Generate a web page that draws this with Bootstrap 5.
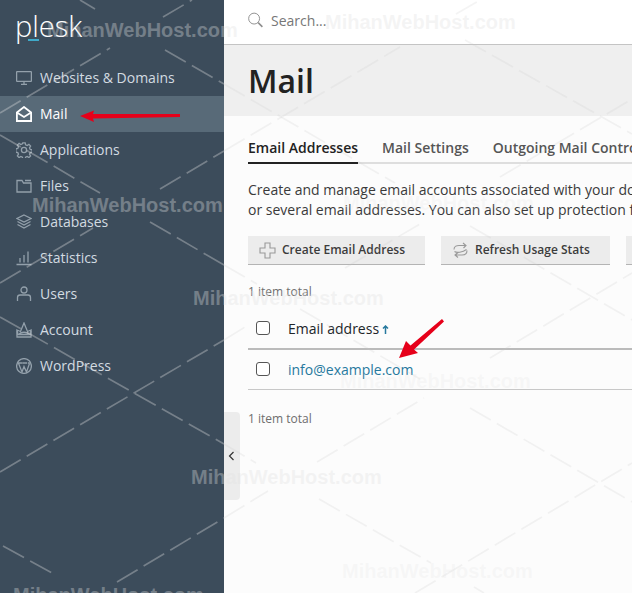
<!DOCTYPE html>
<html lang="en">
<head>
  <meta charset="UTF-8" />
  <title>Mail - Plesk</title>
  <link href="https://cdn.jsdelivr.net/npm/bootstrap@5.3.0/dist/css/bootstrap.min.css" rel="stylesheet" />
  <style>
    html, body { height: 593px; overflow: hidden; }
    body { font-family: "Open Sans", "Liberation Sans", sans-serif; font-size: 14px; color: #222; background: #fcfcfc; position: relative; }
    .side { width: 224px; height: 593px; flex: none; background: #3c4c5b; }
    .logo-box { height: 60px; padding: 8px 0 0 15px; }
    .logo-word { display: block; width: 70px; color: #fff; font-size: 29px; font-weight: 300; line-height: 36px; position: relative; }
    .logo-word::after { content: ""; position: absolute; left: 13px; top: 31px; width: 11px; height: 1.5px; background: #3fa9c9; }
    .side .nav-link { height: 36px; padding: 0 0 2px 16px; display: flex; align-items: center; gap: 8px; color: #d3dbe1; font-size: 14px; }
    .side .nav-link.active { background: #586a78; color: #fff; }
    .side svg { width: 16px; height: 16px; flex: none; margin-top: 2px; fill: none; stroke: #93a0ab; stroke-width: 1.3; }
    .side .active svg { stroke: #fff; stroke-width: 1.8; }
    .main-col { min-width: 0; flex: 1 1 0; overflow: hidden; }
    .top-bar { height: 45px; background: #fff; border-bottom: 1px solid #c4c4c4; padding: 0 0 4px 24px; gap: 8px; }
    .top-bar input { padding: 0; border: 0; background: transparent; box-shadow: none; font-size: 14px; font-family: inherit; }
    .top-bar input::placeholder { color: #777; }
    .title-band { height: 71px; background: #efefef; padding: 0 0 0 24px; display: flex; align-items: center; }
    .title-band h1 { margin: 0; font-size: 32px; line-height: 40px; font-weight: 600; color: #222; }
    .content-box { padding: 16px 0 0 24px; }
    .tab-row { flex-wrap: nowrap; gap: 24px; height: 32px; border-bottom: 2px solid #dedede; white-space: nowrap; }
    .tab-row .nav-link { padding: 0; height: 32px; line-height: 32px; font-weight: 600; color: #555; font-size: 14px; }
    .tab-row .nav-link.active { color: #222; border-bottom: 2px solid #222; }
    .intro { margin: 16px 0 0; line-height: 20px; white-space: nowrap; color: #3a3a3a; }
    .tool-row { margin-top: 16px; gap: 16px; flex-wrap: nowrap; }
    .tool-row .btn { height: 28px; flex: none; padding: 0 20px 0 11px; background: #ececec; border: 0; border-radius: 0; box-shadow: 0 1px 0 #b4b4b4; font-size: 12px; font-weight: 600; color: #3c3c3c; display: flex; align-items: center; gap: 6px; white-space: nowrap; }
    .tool-row svg { width: 17px; height: 17px; fill: none; stroke: #999; stroke-width: 1.1; }
    .count-txt { font-size: 12px; line-height: 16px; color: #6e6e6e; }
    .mail-table { margin: 8px 0 0; }
    .mail-table td, .mail-table th { background: transparent; padding: 0; vertical-align: middle; font-weight: 400; }
    .mail-table .chk-cell { width: 40px; padding-left: 8px; }
    .mail-table thead th { height: 41px; border-bottom: 2px solid #bbb; }
    .mail-table tbody td { height: 40px; border-bottom: 1px solid #c8c8c8; }
    .mail-table .form-check-input { display: block; margin: 0; width: 14px; height: 14px; border: 1px solid #555; border-radius: 3px; background-color: #fff; }
    .mail-table a { color: #27799e; text-decoration: none; }
    .sort-up { width: 7px; height: 9px; margin-left: 3px; fill: none; stroke: #27799e; stroke-width: 1.5; }
    .foot-count { margin-top: 21px; }
    .fold-tab { position: absolute; left: 224px; top: 412px; width: 16px; height: 88px; background: #ececec; border-radius: 0 4px 4px 0; display: flex; align-items: center; justify-content: center; padding-right: 2px; }
    .fold-tab svg { width: 7px; height: 10px; fill: none; stroke: #333; stroke-width: 1.2; }
    .overlay { position: absolute; left: 0; top: 0; width: 632px; height: 593px; pointer-events: none; }
    .wm-lines path { stroke-width: 1.7; stroke-dasharray: 24 7; fill: none; }
    .wm-strong { stroke: rgb(225,225,225); stroke-opacity: .35; }
    .wm-faint { stroke: rgb(200,200,200); stroke-opacity: .2; }
    .overlay text { font-family: "Liberation Sans", Arial, sans-serif; font-size: 20px; font-weight: 700; fill: rgb(225,225,225); fill-opacity: .35; }
    .overlay text.wm-pale { fill-opacity: .2; }
  </style>
</head>
<body>
  <div class="d-flex">
    <aside class="side">
      <div class="logo-box"><span class="logo-word">plesk</span></div>
      <nav class="nav flex-column">
        <a class="nav-link" href="#">
          <svg viewBox="0 0 16 16"><rect x=".6" y="1.6" width="14.8" height="9.8" rx=".5"/><path d="M5 14.400h6M8 11.400v3"/></svg>
          Websites &amp; Domains</a>
        <a class="nav-link active" href="#">
          <svg viewBox="0 0 16 16"><path d="M.9 6.500 8 1l7.100 5.500V15H.9z"/><path d="M.9 6.500 8 11l7.100-4.500"/></svg>
          Mail</a>
        <a class="nav-link" href="#">
          <svg viewBox="0 0 16 16"><circle cx="8" cy="8" r="2.600"/><path d="M6.800.8h2.400l.4 2 1.600.7 1.700-1.100 1.700 1.700-1.100 1.700.7 1.600 2 .4v2.400l-2 .4-.7 1.600 1.100 1.700-1.700 1.700-1.700-1.100-1.600.7-.4 2H6.800l-.4-2-1.600-.7-1.700 1.100-1.700-1.700 1.100-1.700-.7-1.600-2-.4V6.800l2-.4.7-1.600-1.100-1.700 1.700-1.700 1.700 1.100 1.600-.7z"/></svg>
          Applications</a>
        <a class="nav-link" href="#">
          <svg viewBox="0 0 16 16"><path d="M1 2.500h5l1.500 2.500H15v9H1zM9 2.500h6"/></svg>
          Files</a>
        <a class="nav-link" href="#">
          <svg viewBox="0 0 16 16"><path d="M8 1 15 4.500 8 8 1 4.500zM1.500 7.500 8 11l6.500-3.500M1.500 10.500 8 14l6.500-3.500"/></svg>
          Databases</a>
        <a class="nav-link" href="#">
          <svg viewBox="0 0 16 16"><path d="M.5 14.500h15M4 12.500V8M8 12.500V5M12 12.500V1.500"/></svg>
          Statistics</a>
        <a class="nav-link" href="#">
          <svg viewBox="0 0 16 16"><circle cx="8" cy="4" r="3"/><path d="M1.500 15v-3.500c0-1.500 1-2.500 2.500-2.500h8c1.500 0 2.500 1 2.500 2.500V15"/></svg>
          Users</a>
        <a class="nav-link" href="#">
          <svg viewBox="0 0 16 16"><path d="M.8 8.500 1 15h14l.2-6.500M1 8l3.500 1.500L8 1l3.500 8.500L15 8l-1 4.500H2zM3 12.500c1.500-3 8.500-3 10 0"/></svg>
          Account</a>
        <a class="nav-link" href="#">
          <svg viewBox="0 0 16 16"><circle cx="8" cy="8" r="7.400"/><path d="M2.600 5.500 6 14l2-5.500L10.500 14l3-8.500M1.800 5h4.500M6.500 5h4.500M11.800 5h2"/></svg>
          WordPress</a>
      </nav>
    </aside>

    <div class="main-col">
      <header class="top-bar d-flex align-items-center">
        <svg viewBox="0 0 16 16" width="16" height="16" fill="none" stroke="#8c8c8c" stroke-width="1"><circle cx="6.500" cy="6.500" r="5.800"/><path d="m10.800 10.800 4.500 4.500" stroke-width="1.600"/></svg>
        <input class="form-control" type="text" placeholder="Search..." />
      </header>
      <div class="title-band"><h1>Mail</h1></div>
      <div class="content-box">
        <ul class="nav tab-row">
          <li class="nav-item"><a class="nav-link active" href="#">Email Addresses</a></li>
          <li class="nav-item"><a class="nav-link" href="#">Mail Settings</a></li>
          <li class="nav-item"><a class="nav-link" href="#">Outgoing Mail Control</a></li>
        </ul>
        <p class="intro">Create and manage email accounts associated with your domains. You can create one<br />or several email addresses. You can also set up protection from spam and viruses.</p>
        <div class="tool-row d-flex">
          <button class="btn" type="button">
            <svg viewBox="0 0 17 17"><path d="M6 1h5v5h5v5h-5v5H6v-5H1V6h5z"/></svg>
            Create Email Address</button>
          <button class="btn" type="button">
            <svg viewBox="0 0 17 17"><path d="M2 7.500C2 4 5 3.500 7 3.500h6.500M11 1l3 2.500L11.500 6M15 8.500c0 4-3 4.500-5 4.500H3.500M6 10.500 3 13l3 2.500M2.500 9.500c2 1.500 8 1 12-2"/></svg>
            Refresh Usage Stats</button>
          <button class="btn" type="button" aria-label="More"></button>
        </div>
        <div class="count-txt mt-3 pt-1">1 item total</div>
        <table class="table mail-table">
          <thead>
            <tr>
              <th class="chk-cell"><input class="form-check-input" type="checkbox" aria-label="Select all" /></th>
              <th>Email address<svg class="sort-up" viewBox="0 0 7 9"><path d="M3.500 9V1M1 3.500 3.500 1 6 3.500"/></svg></th>
            </tr>
          </thead>
          <tbody>
            <tr>
              <td class="chk-cell"><input class="form-check-input" type="checkbox" aria-label="Select" /></td>
              <td><a href="#">info@example.com</a></td>
            </tr>
          </tbody>
        </table>
        <div class="count-txt foot-count">1 item total</div>
      </div>
    </div>
  </div>

  <div class="fold-tab"><svg viewBox="0 0 7 10"><path d="M5.500 1 1.500 5l4 4"/></svg></div>

  <!-- watermark and the two red arrows lie over the whole shot -->
  <svg class="overlay" viewBox="0 0 632 593">
    <g class="wm-lines wm-strong">
      <path d="M165 50 224 84" />
      <path d="M80 0 95 9" />
      <path d="M0 135 100 193M150 222 224 265" />
      <path d="M0 317 224 444" />
      <path d="M3 546 52 573" />
      <path d="M0 113 110 48M163 17 192 0" />
      <path d="M0 283 93 228M160 189 224 151" />
      <path d="M0 472 224 340" />
      <path d="M117 582 224 518" />
    </g>
    <g class="wm-lines wm-faint">
      <path d="M465 40 632 134" />
      <path d="M224 84 395 183M470 226 632 320" />
      <path d="M224 265 257 284M300 309 420 379M470 408 632 502" />
      <path d="M224 444 256 463M319 499 431 563M474 587 484 593" />
      <path d="M224 151 400 47M456 14 480 0" />
      <path d="M224 340 245 327M345 268 420 224M500 177 632 99" />
      <path d="M224 518 268 491M317 462 424 398M490 358 632 273" />
      <path d="M415 593 632 463" />
    </g>
    <text x="47" y="37">MihanWebHost.com</text>
    <text x="325" y="29">MihanWebHost.com</text>
    <text x="32" y="212">MihanWebHost.com</text>
    <text class="wm-pale" x="343" y="210">MihanWebHost.com</text>
    <text x="193" y="305">MihanWebHost.com</text>
    <text class="wm-pale" x="340" y="388">MihanWebHost.com</text>
    <text x="191" y="484">MihanWebHost.com</text>
    <text class="wm-pale" x="342" y="578">MihanWebHost.com</text>
    <text x="13" y="602">MihanWebHost.com</text>
    <polygon fill="#e6001a" points="80,116 94,110.500 93,114 180,114 180,117 93,118.500 94,122" />
    <polygon fill="#e6001a" points="399,358 406,341 410.500,345.500 442,319 444,321.500 414,349.500 418,353" />
  </svg>

  <script src="https://cdn.jsdelivr.net/npm/bootstrap@5.3.0/dist/js/bootstrap.bundle.min.js"></script>
</body>
</html>
